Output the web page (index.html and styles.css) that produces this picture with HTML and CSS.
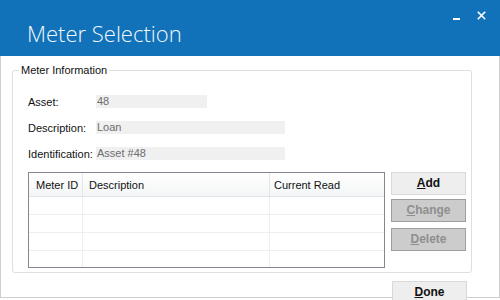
FILE: index.html
```html
<!DOCTYPE html>
<html>
<head>
<meta charset="utf-8">
<link rel="stylesheet" href="styles.css">
</head>
<body>
<div class="window">
  <header class="titlebar">
    <h1 class="title">Meter Selection</h1>
    <div class="controls">
      <svg class="ic-min" width="7" height="9" viewBox="0 0 7 9"><rect x="0" y="7" width="7" height="2" fill="#fff"/></svg>
      <svg class="ic-close" width="9" height="9" viewBox="0 0 9 9"><path d="M0.8 0.8 L8.2 8.2 M8.2 0.8 L0.8 8.2" stroke="#fff" stroke-width="1.6" fill="none"/></svg>
    </div>
  </header>
  <main class="body">
    <section class="group">
      <span class="legend">Meter Information</span>
      <div class="field">
        <span class="label">Asset:</span>
        <span class="value w-short">48</span>
      </div>
      <div class="field">
        <span class="label">Description:</span>
        <span class="value w-long">Loan</span>
      </div>
      <div class="field">
        <span class="label">Identification:</span>
        <span class="value w-long">Asset #48</span>
      </div>
      <div class="list-row">
        <div class="list">
          <div class="list-head">
            <div class="hcell c1">Meter ID</div>
            <div class="hcell c2">Description</div>
            <div class="hcell c3">Current Read</div>
          </div>
          <div class="list-body">
            <div class="row"><div class="cell"></div><div class="cell"></div><div class="cell"></div></div>
            <div class="row"><div class="cell"></div><div class="cell"></div><div class="cell"></div></div>
            <div class="row"><div class="cell"></div><div class="cell"></div><div class="cell"></div></div>
            <div class="row last"><div class="cell"></div><div class="cell"></div><div class="cell"></div></div>
          </div>
        </div>
        <div class="buttons">
          <button class="btn"><u>A</u>dd</button>
          <button class="btn disabled btn-change"><u>C</u>hange</button>
          <button class="btn disabled btn-delete"><u>D</u>elete</button>
        </div>
      </div>
    </section>
    <div class="footer">
      <button class="btn"><u>D</u>one</button>
    </div>
  </main>
</div>
</body>
</html>
```

FILE: styles.css
```css
html, body {
  margin: 0;
  padding: 0;
  background: #fff;
}
body {
  width: 500px;
  height: 300px;
  overflow: hidden;
  font-family: "Liberation Sans", Arial, sans-serif;
  font-size: 11px;
  color: #111;
}
.window {
  width: 500px;
  height: 300px;
  display: flex;
  flex-direction: column;
}
.titlebar {
  height: 56px;
  background: #1172ba;
  display: flex;
  align-items: flex-start;
  flex-shrink: 0;
}
.title {
  margin: 0;
  padding: 21px 0 0 27px;
  flex: 1;
  font-family: "Open Sans", sans-serif;
  font-weight: 300;
  font-size: 22px;
  line-height: 24px;
  color: #f4f8fc;
}
.controls {
  display: flex;
  align-items: flex-start;
  gap: 17px;
  padding: 11px 14px 0 0;
}
.ic-min, .ic-close {
  display: block;
}
.body {
  height: 241px;
  border: 1px solid #cfcfcf;
  border-top: none;
  padding: 0 0 0 11px;
}
.group {
  position: relative;
  margin-top: 14px;
  width: 439px;
  border: 1px solid #dcdfe3;
  border-radius: 3px;
  padding: 24px 4px 4px 15px;
  display: flex;
  flex-direction: column;
}
.legend {
  position: absolute;
  top: -8px;
  left: 6px;
  padding: 0 2px;
  background: #fff;
  line-height: 14px;
}
.field {
  display: flex;
  align-items: center;
  height: 13px;
  margin-bottom: 13px;
}
.field:nth-of-type(3) {
  margin-bottom: 12px;
}
.label {
  width: 68px;
  flex-shrink: 0;
  white-space: nowrap;
}
.value {
  height: 13px;
  line-height: 13px;
  background: #f0f0f0;
  color: #6d6d6d;
  padding-left: 1px;
}
.w-short { width: 110px; }
.w-long { width: 188px; }
.list-row {
  display: flex;
  gap: 6px;
}
.list {
  width: 355px;
  height: 94px;
  border: 1px solid #828790;
  display: flex;
  flex-direction: column;
}
.list-head {
  height: 23px;
  display: grid;
  grid-template-columns: 53px 186px 114px;
  column-gap: 1px;
  background: linear-gradient(#ffffff, #f4f5f6);
  border-bottom: 1px solid #e3e4e6;
}
.hcell {
  line-height: 25px;
  white-space: nowrap;
  box-shadow: 1px 0 0 #e3e5e8;
}
.hcell.c1 { padding-left: 7px; }
.hcell.c2 { padding-left: 6px; }
.hcell.c3 { padding-left: 4px; box-shadow: none; }
.list-body {
  flex: 1;
  display: flex;
  flex-direction: column;
}
.row {
  height: 17px;
  display: grid;
  grid-template-columns: 53px 186px 114px;
  column-gap: 1px;
  border-bottom: 1px solid #efefef;
}
.row.last {
  flex: 1;
  border-bottom: none;
}
.cell {
  box-shadow: 1px 0 0 #efefef;
}
.cell:last-child { box-shadow: none; }
.buttons {
  display: flex;
  flex-direction: column;
}
.btn {
  width: 75px;
  height: 23px;
  padding: 0;
  margin: 0;
  border: 1px solid #d9d9d9;
  background: #eeeeee;
  font-family: "Liberation Sans", Arial, sans-serif;
  font-size: 12px;
  font-weight: bold;
  color: #111;
  line-height: 21px;
  text-align: center;
}
.btn u {
  text-underline-offset: 1px;
}
.btn.disabled {
  background: #cccccc;
  border-color: #9e9e9e;
  color: #8f8f8f;
}
.btn-change { margin-top: 4px; }
.btn-delete { margin-top: 6px; }
.footer {
  display: flex;
  justify-content: flex-end;
  padding-right: 32px;
  margin-top: 8px;
}
```
